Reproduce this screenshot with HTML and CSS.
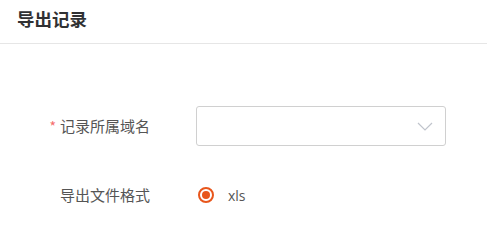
FILE: index.html
```html
<!DOCTYPE html>
<html lang="zh-CN">
<head>
<meta charset="utf-8">
<link rel="stylesheet" href="styles.css">
</head>
<body>
<div class="page">
  <div class="header">导出记录</div>
  <div class="form">
    <div class="row">
      <div class="label"><span class="req">*</span>记录所属域名</div>
      <div class="select">
        <svg class="chev" width="16" height="9" viewBox="0 0 16 9"><path d="M1 1 L8 8 L15 1" fill="none" stroke="#c0c4cc" stroke-width="1.2"/></svg>
      </div>
    </div>
    <div class="row row2">
      <div class="label">导出文件格式</div>
      <div class="radio">
        <span class="ring"><span class="dot"></span></span>
        <span class="rtext">xls</span>
      </div>
    </div>
  </div>
</div>
</body>
</html>
```
FILE: styles.css
```css
html, body { margin: 0; padding: 0; background: #fff; }
body { font-family: "Noto Sans CJK SC", "Noto Sans", sans-serif; width: 487px; height: 235px; overflow: hidden; }
.header {
  height: 44px;
  box-sizing: border-box;
  border-bottom: 1px solid #e6e6e6;
  padding-left: 17px;
  font-size: 17.5px;
  font-weight: bold;
  color: #303133;
  line-height: 38px;
}
.form { padding-top: 62px; }
.row { display: flex; align-items: center; height: 40px; }
.row2 { margin-top: 29px; }
.label {
  width: 150px;
  text-align: right;
  font-size: 15px;
  color: #555;
  margin-right: 46px;
  line-height: 40px;
}
.req { color: #f56c6c; margin-right: 4px; font-size: 14px; }
.select {
  width: 250px;
  height: 40px;
  box-sizing: border-box;
  border: 1px solid #d0d0d0;
  border-radius: 3px;
  display: flex;
  align-items: center;
  justify-content: flex-end;
  padding-right: 12px;
}
.chev { display: block; }
.radio { display: flex; align-items: center; margin-left: 2px; }
.ring {
  width: 16px; height: 16px;
  box-sizing: border-box;
  border: 2px solid #e8561c;
  border-radius: 50%;
  display: flex; align-items: center; justify-content: center;
}
.dot { width: 8px; height: 8px; border-radius: 50%; background: #e8561c; }
.rtext { margin-left: 14px; font-family: "Open Sans", "Noto Sans", sans-serif; font-size: 14px; color: #555; }
```
